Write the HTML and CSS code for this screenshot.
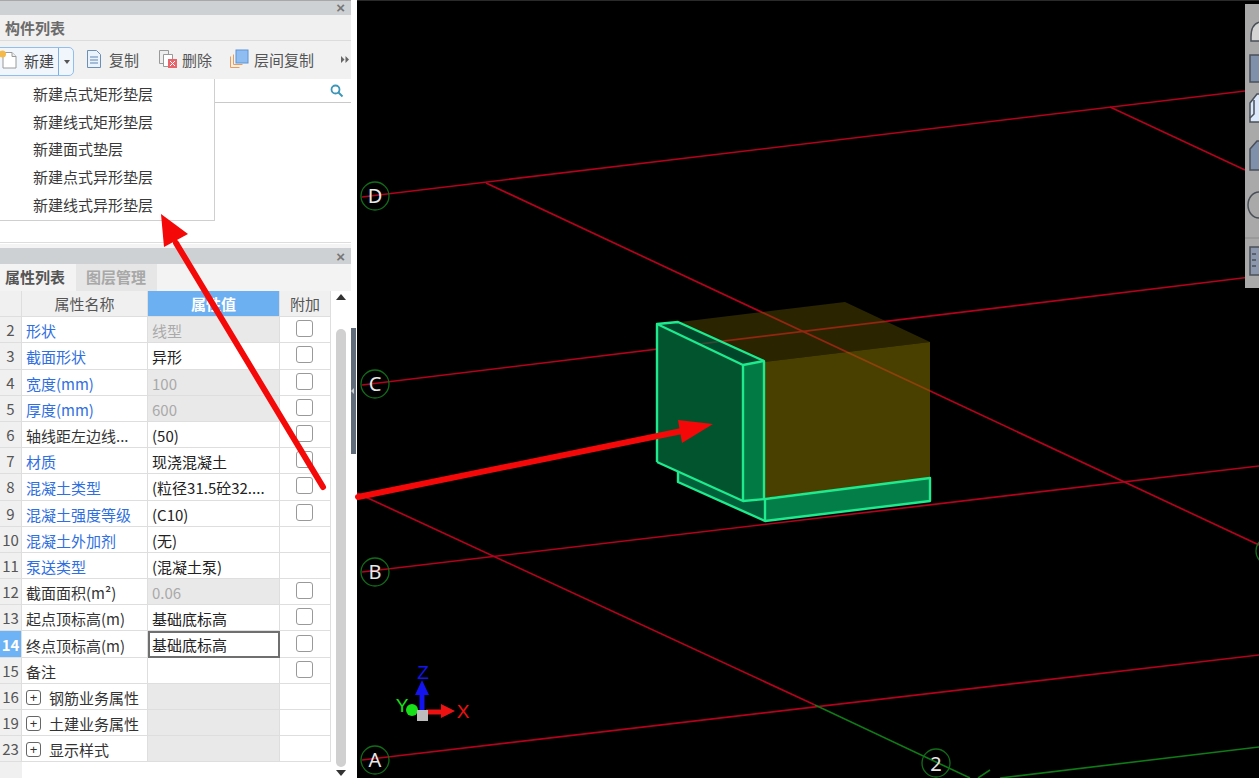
FILE: index.html
```html
<!DOCTYPE html>
<html lang="zh">
<head>
<meta charset="utf-8">
<title>构件列表</title>
<link rel="stylesheet" href="styles.css">
</head>
<body>
<div class="app">
  <aside class="sidebar">
    <section class="panel-top">
      <div class="titlebar"><span class="close">×</span></div>
      <div class="panel-name">构件列表</div>
      <div class="toolbar">
        <div class="split-btn">
          <div class="split-main">
            <svg class="tool-icon" width="20" height="20" viewBox="0 0 20 20"><path d="M3 2.500h9l4 4V18H3z" fill="#fff" stroke="#9a9a9a"/><path d="M12 2.500v4h4" fill="#eee" stroke="#9a9a9a"/><circle cx="2.500" cy="4" r="3.500" fill="#f5b94a"/></svg>
            <span>新建</span>
          </div>
          <div class="split-caret"></div>
        </div>
        <div class="tool">
          <svg class="tool-icon" width="18" height="20" viewBox="0 0 18 20"><path d="M2.500 1.500h9l4 4v13h-13z" fill="#eaf2fb" stroke="#6d8fb5"/><path d="M5 8h8M5 11h8M5 14h8" stroke="#5e85b3"/></svg>
          <span>复制</span>
        </div>
        <div class="tool">
          <svg class="tool-icon" width="20" height="20" viewBox="0 0 20 20"><path d="M1.500 1.500h9v13h-9z" fill="#eee" stroke="#999"/><path d="M5.500 5.500h9v12h-9z" fill="#fff" stroke="#999"/><rect x="10" y="10" width="9" height="9" fill="#e8646a"/><path d="M12 12l5 5M17 12l-5 5" stroke="#fff"/></svg>
          <span>删除</span>
        </div>
        <div class="tool">
          <svg class="tool-icon" width="20" height="20" viewBox="0 0 20 20"><path d="M1.500 7.500v11h9M4.500 5.500v10h9" fill="none" stroke="#ee9a55"/><rect x="7" y="1" width="12" height="13" fill="#8fbdf2" stroke="#5d93d6"/></svg>
          <span>层间复制</span>
        </div>
        <div class="more">
          <svg width="8" height="7" viewBox="0 0 8 7"><path d="M0 0l3.500 3.500L0 7zM4.500 0L8 3.500 4.500 7z" fill="#666"/></svg>
        </div>
      </div>
      <div class="search">
        <svg width="14" height="14" viewBox="0 0 14 14"><circle cx="5.500" cy="5.500" r="4" fill="none" stroke="#3d96b8" stroke-width="1.800"/><path d="M8.500 8.500l4 4" stroke="#3d96b8" stroke-width="2"/></svg>
      </div>
      <div class="list-body"></div>
      <ul class="menu">
        <li>新建点式矩形垫层</li>
        <li>新建线式矩形垫层</li>
        <li>新建面式垫层</li>
        <li>新建点式异形垫层</li>
        <li>新建线式异形垫层</li>
      </ul>
    </section>

    <section class="panel-bottom">
      <div class="titlebar"><span class="close">×</span></div>
      <div class="tabs">
        <div class="tab active">属性列表</div>
        <div class="tab">图层管理</div>
      </div>
      <div class="grid-wrap">
        <div class="prop-table">
          <div class="row head">
            <div class="c-num"></div>
            <div class="c-name">属性名称</div>
            <div class="c-val">属性值</div>
            <div class="c-add">附加</div>
          </div>
          <div class="row"><div class="c-num">2</div><div class="c-name link">形状</div><div class="c-val off">线型</div><div class="c-add"><i class="check"></i></div></div>
          <div class="row"><div class="c-num">3</div><div class="c-name link">截面形状</div><div class="c-val">异形</div><div class="c-add"><i class="check"></i></div></div>
          <div class="row"><div class="c-num">4</div><div class="c-name link">宽度(mm)</div><div class="c-val off">100</div><div class="c-add"><i class="check"></i></div></div>
          <div class="row"><div class="c-num">5</div><div class="c-name link">厚度(mm)</div><div class="c-val off">600</div><div class="c-add"><i class="check"></i></div></div>
          <div class="row"><div class="c-num">6</div><div class="c-name">轴线距左边线...</div><div class="c-val">(50)</div><div class="c-add"><i class="check"></i></div></div>
          <div class="row"><div class="c-num">7</div><div class="c-name link">材质</div><div class="c-val">现浇混凝土</div><div class="c-add"><i class="check"></i></div></div>
          <div class="row"><div class="c-num">8</div><div class="c-name link">混凝土类型</div><div class="c-val">(粒径31.5砼32....</div><div class="c-add"><i class="check"></i></div></div>
          <div class="row"><div class="c-num">9</div><div class="c-name link">混凝土强度等级</div><div class="c-val">(C10)</div><div class="c-add"><i class="check"></i></div></div>
          <div class="row"><div class="c-num">10</div><div class="c-name link">混凝土外加剂</div><div class="c-val">(无)</div><div class="c-add"></div></div>
          <div class="row"><div class="c-num">11</div><div class="c-name link">泵送类型</div><div class="c-val">(混凝土泵)</div><div class="c-add"></div></div>
          <div class="row"><div class="c-num">12</div><div class="c-name">截面面积(m²)</div><div class="c-val off">0.06</div><div class="c-add"><i class="check"></i></div></div>
          <div class="row"><div class="c-num">13</div><div class="c-name">起点顶标高(m)</div><div class="c-val">基础底标高</div><div class="c-add"><i class="check"></i></div></div>
          <div class="row"><div class="c-num selected">14</div><div class="c-name">终点顶标高(m)</div><div class="c-val editing">基础底标高</div><div class="c-add"><i class="check"></i></div></div>
          <div class="row"><div class="c-num">15</div><div class="c-name">备注</div><div class="c-val"></div><div class="c-add"><i class="check"></i></div></div>
          <div class="row"><div class="c-num">16</div><div class="c-name"><i class="expand">+</i>钢筋业务属性</div><div class="c-val off"></div><div class="c-add"></div></div>
          <div class="row"><div class="c-num">19</div><div class="c-name"><i class="expand">+</i>土建业务属性</div><div class="c-val off"></div><div class="c-add"></div></div>
          <div class="row"><div class="c-num">23</div><div class="c-name"><i class="expand">+</i>显示样式</div><div class="c-val off"></div><div class="c-add"></div></div>
          <div class="table-rest"></div>
        </div>
        <div class="scrollbar">
          <span class="arrow-up"></span>
          <span class="thumb"></span>
          <span class="arrow-down"></span>
        </div>
      </div>
    </section>
  </aside>

  <div class="gutter"><div class="gutter-handle"><span></span></div></div>

  <main class="canvas">
    <svg class="scene" viewBox="357 0 902 778" width="902" height="778">
      <g class="grid-red">
        <path d="M362 197L1245 91"/>
        <path d="M362 385L1259 276"/>
        <path d="M362 572L1259 466"/>
        <path d="M362 760L1259 655"/>
        <path d="M486 183L1259 545"/>
        <path d="M1110 107L1245 170"/>
        <path d="M357 493L815 705"/>
      </g>
      <g class="grid-green">
        <path d="M815 705L970 778"/>
        <path d="M1000 778L1259 747"/>
        <path d="M978 778L990 770"/>
      </g>
      <g class="bubble">
        <circle cx="375" cy="196" r="14"/>
        <circle cx="375" cy="384" r="14"/>
        <circle cx="375" cy="572" r="14"/>
        <circle cx="375" cy="760" r="14"/>
        <circle cx="936" cy="763" r="14"/>
        <circle cx="1270" cy="551" r="14"/>
      </g>
      <g class="bubble-text">
        <text x="375" y="203">D</text>
        <text x="375" y="391">C</text>
        <text x="375" y="579">B</text>
        <text x="375" y="767">A</text>
        <text x="936" y="771">2</text>
      </g>
      <polygon class="box-top" points="680,322 845,302 930,342 764,362"/>
      <polygon class="box-front" points="764,362 930,342 930,478 764,498"/>
      <polygon class="plate-side" points="678,470 765,500 765,521 678,482"/>
      <polygon class="plate-front" points="765,499 930,478 930,501 765,521"/>
      <polygon class="strip-top" points="657,324 678,322 764,361 743,365"/>
      <polygon class="slab-side" points="657,325 743,365 743,501 657,462"/>
      <polygon class="slab-front" points="743,365 764,362 764,499 743,501"/>
      <g class="box-edge">
        <path d="M657,462V324L678,322L764,361V499"/>
        <path d="M657,324L743,365V501L657,462"/>
        <path d="M743,365L764,361"/>
        <path d="M743,501L765,499L930,478V501L765,521L678,482V471"/>
        <path d="M765,499V521"/>
      </g>
      <g class="axis">
        <path class="ax-z" d="M422 712V690"/>
        <polygon class="ax-z-head" points="422,680 429,695 415,695"/>
        <text class="ax-z-label" x="423" y="679">Z</text>
        <path class="ax-x" d="M426 712H445"/>
        <polygon class="ax-x-head" points="455,711 441,704 441,718"/>
        <text class="ax-x-label" x="463" y="718">X</text>
        <circle class="ax-y-ball" cx="412" cy="710" r="6"/>
        <text class="ax-y-label" x="402" y="712">Y</text>
        <rect class="ax-origin" x="417" y="710" width="11" height="11"/>
      </g>
    </svg>

    <div class="side-tools">
      <svg width="14" height="284" viewBox="0 0 14 284">
        <g fill="#7f90ab" stroke="#4a5058" stroke-width="1.500">
          <path d="M6 33c0-9 3-14 9-15v19H6z" fill="#d4d4d4"/>
          <rect x="5" y="51" width="12" height="27"/>
          <path d="M5 99l7-9h4v28H5z" fill="#dce8fb"/>
          <path d="M5 114l4-4V96" fill="none"/>
          <path d="M5 145l7-8h4v29H5z"/>
          <path d="M14 188a11 13 0 0 0 0 26" fill="none"/>
          <rect x="5" y="243" width="12" height="28" fill="#8a97ad"/>
          <path d="M7 250h4M7 256h4M7 262h4" fill="none"/>
        </g>
        <path d="M0 234H14" stroke="#8b8b8b"/>
      </svg>
    </div>
  </main>

  <svg class="callouts" width="1259" height="778" viewBox="0 0 1259 778">
    <path class="callout-line" d="M323 487L176 243"/>
    <polygon class="callout-head" points="161,214 188,234 164,247"/>
    <path class="callout-line" d="M358 497L682 431"/>
    <polygon class="callout-head" points="713,424 678,420 682,443"/>
  </svg>
</div>
</body>
</html>
```

FILE: styles.css
```css
* { box-sizing: border-box; }
html, body { margin: 0; padding: 0; height: 100%; overflow: hidden; background: #fff; }
body { font-family: "Noto Sans CJK SC", "Noto Sans", sans-serif; font-size: 15px; color: #333; }

.app { position: relative; display: flex; width: 1259px; height: 778px; overflow: hidden; }

.sidebar { width: 351px; height: 778px; display: flex; flex-direction: column; flex: none; background: #fff; }
.panel-top { position: relative; height: 248px; flex: none; border-bottom: 4px solid #f4f4f4; }
.panel-bottom { flex: 1; display: flex; flex-direction: column; min-height: 0; }

.titlebar { height: 15px; background: #ced1d4; border-top: 1px solid #a8a8a8; display: flex; justify-content: flex-end; align-items: center; padding-right: 6px; flex: none; }
.panel-bottom .titlebar { height: 16px; border-top: 0; padding-top: 2px; }
.close { font-size: 15px; line-height: 14px; color: #777; font-family: "Liberation Sans", sans-serif; font-weight: bold; }

.panel-name { height: 26px; line-height: 25px; padding-left: 5px; background: #f0f0f0; font-weight: bold; color: #6b6b6b; border-bottom: 1px solid #dcdcdc; }

.toolbar { height: 38px; padding-bottom: 2px; background: #f1f1f1; display: flex; align-items: center; position: relative; color: #555; }
.split-btn { display: flex; width: 75px; height: 29px; align-self: flex-start; margin-top: 6px; margin-left: -1px; border: 1px solid #90bfee; border-radius: 0 5px 5px 0; background: #f0f6fc; flex: none; }
.split-main { display: flex; align-items: center; gap: 4px; width: 59px; padding-bottom: 3px; border-right: 1px solid #7fb0e2; color: #444; }
.split-caret { flex: 1; position: relative; }
.split-caret::after { content: ""; position: absolute; left: 5px; top: 12px; border: 3px solid transparent; border-top: 4px solid #555; }
.tool { display: flex; align-items: center; gap: 6px; margin-left: 11px; flex: none; }
.tool:nth-child(3) { margin-left: 19px; gap: 4px; }
.tool:nth-child(4) { margin-left: 17px; gap: 5px; }
.tool-icon { flex: none; }
.more { position: absolute; right: 2px; top: 15px; display: flex; }

.search { height: 24px; background: #fff; border-bottom: 1px solid #c9c9c9; display: flex; justify-content: flex-end; align-items: center; padding-right: 7px; }
.list-body { height: 140px; background: #fff; border-bottom: 1px solid #ddd; }

.menu { position: absolute; left: 0; top: 79px; width: 215px; height: 142px; margin: 0; padding: 1px 0 0 33px; list-style: none; background: #fff; border: 1px solid #cfcfcf; border-left: 0; border-top: 0; color: #3a3a3a; z-index: 2; }
.menu li { height: 27.700px; line-height: 27.700px; white-space: nowrap; }

.tabs { height: 27px; background: #f3f3f3; display: flex; flex: none; }
.tab { line-height: 25px; font-weight: bold; }
.tab.active { width: 76px; padding-left: 5px; color: #555; }
.tab:not(.active) { width: 81px; padding-left: 10px; background: #e6e6e6; color: #a8a8a8; }

.grid-wrap { flex: 1; display: flex; min-height: 0; }
.prop-table { width: 331px; display: flex; flex-direction: column; flex: none; }
.row { display: grid; grid-template-columns: 22px 126px 132px 51px; height: 26.200px; flex: none; }
.row > div { display: flex; align-items: center; border-bottom: 1px solid #dedede; border-right: 1px solid #dedede; white-space: nowrap; overflow: hidden; min-width: 0; line-height: 1; }
.c-num { justify-content: center; background: #f0f0f0; color: #555; }
.c-num.selected { background: #6db3f5; color: #fff; font-weight: bold; }
.c-name { padding: 2px 0 0 4px; color: #333; }
.c-name.link { color: #2f6fdf; }
.c-val { padding: 2px 0 0 4px; color: #222; }
.c-val.off { background: #e9e9e9; color: #aaa; }
.c-val.editing { border: 2px solid #6f6f6f !important; padding: 0 0 0 2px; }
.c-add { justify-content: center; padding: 0 2px 2px 0; }
.head > div { background: #f0f0f0; justify-content: center; color: #555; padding: 0; }
.head .c-val { background: #6db0f2; color: #fff; font-weight: bold; }
.check { display: block; width: 17px; height: 17px; border: 1px solid #999; border-radius: 3px; background: #fff; }
.expand { display: flex; width: 15px; height: 15px; border: 1px solid #666; border-radius: 3px; margin-right: 8px; align-items: center; justify-content: center; font-style: normal; font-size: 13px; line-height: 1; font-family: "Liberation Sans", sans-serif; color: #333; flex: none; }
.table-rest { flex: 1; border-left: 22px solid #f0f0f0; }

.scrollbar { flex: 1; position: relative; display: flex; flex-direction: column; align-items: center; background: #fff; padding-top: 2px; }
.arrow-up { width: 0; height: 0; border: 5px solid transparent; border-top: 0; border-bottom: 6px solid #333; margin-top: 1px; flex: none; }
.thumb { width: 10px; flex: 1; margin: 29px 0 0; background: #d0d0d0; border-radius: 5px; }
.arrow-down { width: 0; height: 0; border: 5px solid transparent; border-bottom: 0; border-top: 6px solid #333; margin: 3px 0 2px; flex: none; }

.gutter { width: 6px; flex: none; background: #fff; padding-top: 328px; }
.gutter-handle { width: 5px; height: 126px; background: #5f6b78; position: relative; display: flex; align-items: center; }
.gutter-handle span { display: block; border: 3px solid transparent; border-right: 3px solid #c8cdd2; border-left: 0; }

.canvas { position: relative; flex: 1; min-width: 0; background: #000; border-top: 1px solid #2a2a2a; }
.scene { display: block; position: absolute; left: 0; top: -1px; }
.grid-red path { stroke: #b4021c; stroke-width: 1.700; fill: none; }
.grid-green path { stroke: #0f7a16; stroke-width: 1.600; fill: none; }
.bubble circle { fill: none; stroke: #116e18; stroke-width: 1.300; }
.bubble-text text { fill: #e8e8e8; font-family: "Noto Sans", sans-serif; font-size: 20px; text-anchor: middle; }
.box-top { fill: rgba(100, 88, 0, .42); }
.box-front { fill: rgba(118, 104, 0, .62); }
.plate-side { fill: #00603a; }
.plate-front { fill: #037e48; }
.strip-top { fill: rgba(0, 100, 60, .7); }
.slab-side { fill: #02542f; }
.slab-front { fill: #017a44; }
.box-edge path { fill: none; stroke: #1eea8e; stroke-width: 2.400; stroke-linejoin: round; }
.axis text { font-family: "Liberation Sans", sans-serif; font-size: 19px; }
.ax-z { stroke: #1414ee; stroke-width: 5; }
.ax-z-head { fill: #1414ee; }
.ax-z-label { fill: #1414ee; text-anchor: middle; }
.ax-x { stroke: #ee1111; stroke-width: 5; }
.ax-x-head { fill: #ee1111; }
.ax-x-label { fill: #ee1111; text-anchor: middle; }
.ax-y-ball { fill: #18e018; }
.ax-y-label { fill: #18e018; text-anchor: middle; }
.ax-origin { fill: #bdbdbd; }

.side-tools { position: absolute; right: 0; top: 3px; width: 14px; height: 284px; background: #a9a9a9; }
.side-tools svg { display: block; }

.callouts { position: absolute; left: 0; top: 0; pointer-events: none; z-index: 5; }
.callout-line { stroke: #f40808; stroke-width: 6; stroke-linecap: round; fill: none; }
.callout-head { fill: #f40808; }
```
